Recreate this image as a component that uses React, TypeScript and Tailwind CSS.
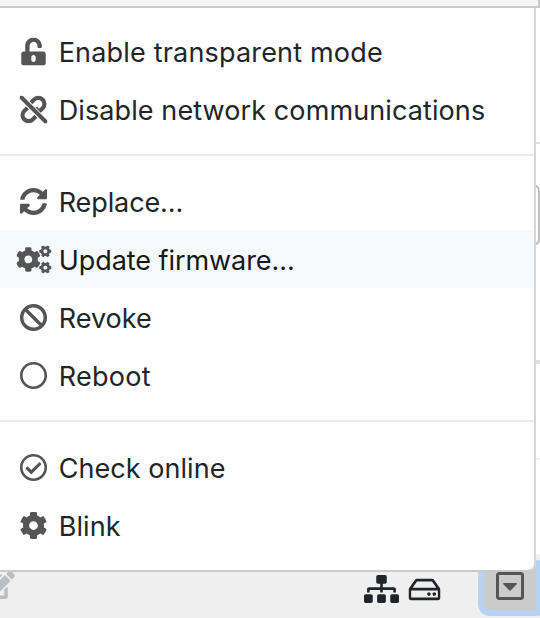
import type { ReactNode } from "react";
import {
  FaBan,
  FaCog,
  FaCogs,
  FaEdit,
  FaRegCaretSquareDown,
  FaRegCheckCircle,
  FaRegCircle,
  FaRegHdd,
  FaSitemap,
  FaSyncAlt,
  FaUnlockAlt,
} from "react-icons/fa";

function LinkOff() {
  return (
    <svg width="28" height="28" viewBox="0 0 28 28" fill="none" stroke="currentColor" strokeWidth="4.2">
      <path d="M11.4 7.2 L14.4 4.4 A5.9 5.9 0 0 1 23.4 12.4 L20.6 15.2 Q17.8 16.2 16 12" />
      <path d="M16.4 20.8 L13.6 23.6 A5.9 5.9 0 0 1 4.6 15.6 L8 12.2" />
      <path d="M2 2 L26 26" stroke="white" strokeWidth="5.6" />
      <path d="M2 2 L26 26" strokeLinecap="round" strokeWidth="3.9" />
    </svg>
  );
}

function Item({ icon, label, spacing, active }: { icon: ReactNode; label: string; spacing: string; active?: boolean }) {
  return (
    <div className={`flex h-[58px] items-center pl-[15px] ${active ? "bg-[#f8f9fb] text-[#16181b]" : "text-[#212529]"}`}>
      <span className="flex w-9 shrink-0 translate-x-[0.5px] translate-y-[0.5px] items-center justify-center text-[28px] text-[#555]">
        {icon}
      </span>
      <span className={`ml-[7.7px] whitespace-nowrap pt-1 text-[27px] leading-[54px] ${spacing}`}>{label}</span>
    </div>
  );
}

function Divider() {
  return <div className="my-4 h-0.5 bg-[#e9ecef]" />;
}

export default function App() {
  return (
    <main className="relative flex h-[618px] w-[540px] flex-col overflow-hidden bg-white font-['Inter','Liberation_Sans',sans-serif]">
      <div className="h-2 shrink-0 border-b-2 border-[#cbcbcb] bg-[#f6f6f6]">
        <div className="ml-auto h-1.5 w-0.5 bg-[#cbcbcb]" />
      </div>
      <div className="flex h-[546px] shrink-0 flex-col pl-[534px]">
        <div className="h-[134px]" />
        <div className="h-0.5 bg-[#dee2e6]" />
        <div className="h-10" />
        <div className="-ml-2 h-[62px] w-[14px] rounded-[7px] border-2 border-[#bdbdbd]" />
        <div className="h-[114px]" />
        <div className="h-1 bg-[#dee2e6]" />
        <div className="h-[94px]" />
        <div className="h-0.5 bg-[#eeeeee]" />
      </div>
      <footer className="relative h-16 shrink-0 bg-[#efefef] text-[#212529]">
        <FaEdit className="absolute -left-[17px] top-[17px] h-7 w-[32px] text-[#bcbdbe]" />
        <FaSitemap className="absolute left-[364px] top-[21px] h-7 w-[35px]" />
        <FaRegHdd className="absolute left-[408px] top-[19px] h-8 w-8 translate-x-[0.5px] translate-y-[0.5px]" />
        <div className="absolute left-[478px] top-1.5 h-14 w-[70px] rounded-[12px] bg-[#b7d2f2]" />
        <div className="absolute left-[484px] top-1.5 flex h-[50px] w-[52px] items-center justify-center rounded-[5px] bg-[#cbcbcb]">
          <FaRegCaretSquareDown className="mt-px h-8 w-8 text-[#555]" />
        </div>
      </footer>
      <nav className="absolute left-0 top-2 h-[564px] w-[536px] rounded-br-lg border-b-2 border-r-2 border-[#cbcbcb] bg-white bg-clip-padding pt-[14px] border-r-[#d7d7d7]">
        <Item icon={<FaUnlockAlt />} label="Enable transparent mode" spacing="tracking-[0.18px]" />
        <Item icon={<LinkOff />} label="Disable network communications" spacing="tracking-[0.1px]" />
        <Divider />
        <Item icon={<FaSyncAlt />} label="Replace..." spacing="tracking-[-0.1px]" />
        <Item icon={<FaCogs className="h-7 w-[35px]" />} label="Update firmware..." spacing="tracking-[-0.06px]" active />
        <Item icon={<FaBan />} label="Revoke" spacing="tracking-[0px]" />
        <Item icon={<FaRegCircle />} label="Reboot" spacing="tracking-[0.3px]" />
        <Divider />
        <Item icon={<FaRegCheckCircle />} label="Check online" spacing="tracking-[0.05px]" />
        <Item icon={<FaCog />} label="Blink" spacing="tracking-[0.1px]" />
      </nav>
    </main>
  );
}
